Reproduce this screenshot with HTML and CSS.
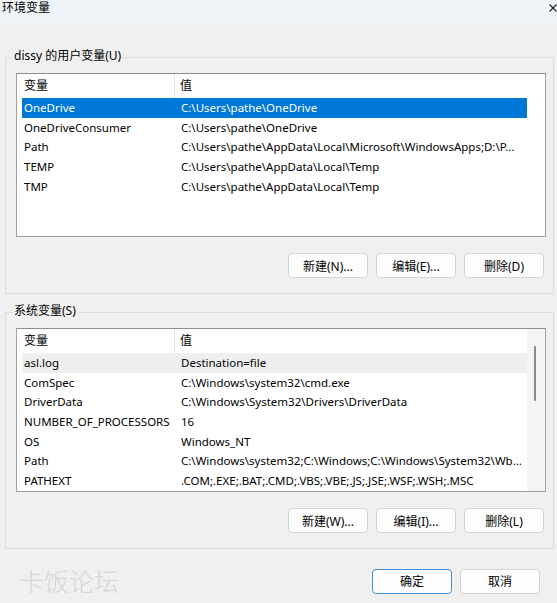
FILE: index.html
```html
<!DOCTYPE html>
<html lang="zh-CN">
<head>
    <meta charset="UTF-8">
    <title>环境变量</title>
    <link rel="stylesheet" href="styles.css">
</head>
<body>

    <div class="title-bar">
        <span class="title">环境变量</span>
        <svg class="close" width="8" height="8" viewBox="0 0 8 8">
            <path d="M0.5 0.5 L7.5 7.5 M7.5 0.5 L0.5 7.5" stroke="#1f1f1f" stroke-width="1.1" fill="none"/>
        </svg>
    </div>

    <div class="group">
        <span class="group-label">dissy 的用户变量(U)</span>
        <div class="list">
            <div class="list-body">
                <div class="list-head">
                    <div class="col-name">变量</div>
                    <div class="col-value">值</div>
                </div>
                <div class="row selected"><div class="cell-name">OneDrive</div><div class="cell-value">C:\Users\pathe\OneDrive</div></div>
                <div class="row"><div class="cell-name">OneDriveConsumer</div><div class="cell-value">C:\Users\pathe\OneDrive</div></div>
                <div class="row"><div class="cell-name">Path</div><div class="cell-value">C:\Users\pathe\AppData\Local\Microsoft\WindowsApps;D:\P...</div></div>
                <div class="row"><div class="cell-name">TEMP</div><div class="cell-value">C:\Users\pathe\AppData\Local\Temp</div></div>
                <div class="row"><div class="cell-name">TMP</div><div class="cell-value">C:\Users\pathe\AppData\Local\Temp</div></div>
            </div>
        </div>
        <div class="buttons">
            <button class="btn">新建(N)...</button>
            <button class="btn">编辑(E)...</button>
            <button class="btn">删除(D)</button>
        </div>
    </div>

    <div class="group second">
        <span class="group-label">系统变量(S)</span>
        <div class="list">
            <div class="list-body">
                <div class="list-head">
                    <div class="col-name">变量</div>
                    <div class="col-value">值</div>
                </div>
                <div class="row hover"><div class="cell-name">asl.log</div><div class="cell-value">Destination=file</div></div>
                <div class="row"><div class="cell-name">ComSpec</div><div class="cell-value">C:\Windows\system32\cmd.exe</div></div>
                <div class="row"><div class="cell-name">DriverData</div><div class="cell-value">C:\Windows\System32\Drivers\DriverData</div></div>
                <div class="row"><div class="cell-name">NUMBER_OF_PROCESSORS</div><div class="cell-value">16</div></div>
                <div class="row"><div class="cell-name">OS</div><div class="cell-value">Windows_NT</div></div>
                <div class="row"><div class="cell-name">Path</div><div class="cell-value">C:\Windows\system32;C:\Windows;C:\Windows\System32\Wb...</div></div>
                <div class="row"><div class="cell-name">PATHEXT</div><div class="cell-value">.COM;.EXE;.BAT;.CMD;.VBS;.VBE;.JS;.JSE;.WSF;.WSH;.MSC</div></div>
            </div>
            <div class="scrollbar">
                <div class="thumb"></div>
            </div>
        </div>
        <div class="buttons">
            <button class="btn">新建(W)...</button>
            <button class="btn">编辑(I)...</button>
            <button class="btn">删除(L)</button>
        </div>
    </div>

    <div class="footer">
        <span class="watermark">卡饭论坛</span>
        <div class="footer-buttons">
            <button class="btn default">确定</button>
            <button class="btn">取消</button>
        </div>
    </div>

</body>
</html>
```

FILE: styles.css
```css
body {
    font-family: "Noto Sans", "Noto Sans CJK SC", sans-serif;
    font-size: 12px;
    color: #000;
    margin: 0;
    padding: 0;
    background-color: #f0f0f0;
    width: 557px;
    height: 603px;
    overflow: hidden;
}

.title-bar {
    height: 23px;
    background-color: #eef4f8;
    display: flex;
    justify-content: space-between;
    align-items: flex-start;
    padding: 0 0 0 2px;
    box-sizing: border-box;
}

.title {
    line-height: 16px;
    font-size: 12px;
}

.close {
    margin-top: 4px;
    margin-right: 0;
}

/* group box with its caption sitting on the top border */
.group {
    position: relative;
    border: 1px solid #dcdcdc;
    margin: 34px 3px 0 5px;
    padding: 15px 7px 15px 10px;
}

.group.second {
    margin-top: 18px;
}

.group-label {
    position: absolute;
    top: -10px;
    left: 6px;
    padding: 0 2px;
    line-height: 16px;
    background-color: #f0f0f0;
}

.list {
    display: flex;
    height: 164px;
    width: 530px;
    box-sizing: border-box;
    border: 1px solid #a0a0a0;
    border-top-color: #8c8c8c;
    background-color: #fff;
}

.list-body {
    width: 510px;
    padding-left: 5px;
    box-sizing: border-box;
}

.list-head {
    display: flex;
    height: 24px;
    align-items: stretch;
}

.col-name {
    width: 153px;
    padding-left: 2px;
    box-sizing: border-box;
    border-right: 1px solid #e5e5e5;
    line-height: 23px;
}

.col-value {
    padding-left: 5px;
    line-height: 23px;
}

.row {
    display: flex;
    height: 19.7px;
    line-height: 19.7px;
    width: 505px;
    font-size: 11.5px;
    white-space: nowrap;
    overflow: hidden;
}

.row.selected {
    background-color: #0078d7;
    color: #fff;
}

.row.hover {
    background-color: #efefef;
}

.cell-name {
    width: 157px;
    padding-left: 2px;
    box-sizing: border-box;
    flex-shrink: 0;
}

.cell-value {
    padding-left: 2px;
}

.scrollbar {
    flex: 1;
    background-color: #f4f4f4;
    position: relative;
}

.thumb {
    position: absolute;
    left: 7px;
    top: 17px;
    width: 2px;
    height: 55px;
    border-radius: 1px;
    background-color: #8a8a8a;
}

.buttons {
    display: flex;
    justify-content: flex-end;
    gap: 8px;
    margin-top: 16px;
    padding-right: 2px;
}

.btn {
    width: 80px;
    height: 25px;
    font-family: "Noto Sans", "Noto Sans CJK SC", sans-serif;
    font-size: 12px;
    color: #000;
    background-color: #fdfdfd;
    border: 1px solid #d3d3d3;
    border-radius: 4px;
    padding: 0;
}

.btn.default {
    border-color: #3f8fd8;
}

.footer {
    display: flex;
    justify-content: space-between;
    align-items: center;
    margin-top: 17px;
    padding: 0 17px 0 19px;
}

.watermark {
    font-size: 25px;
    font-weight: 300;
    color: #d6d6d6;
    line-height: 30px;
}

.footer-buttons {
    display: flex;
    gap: 8px;
}
```
